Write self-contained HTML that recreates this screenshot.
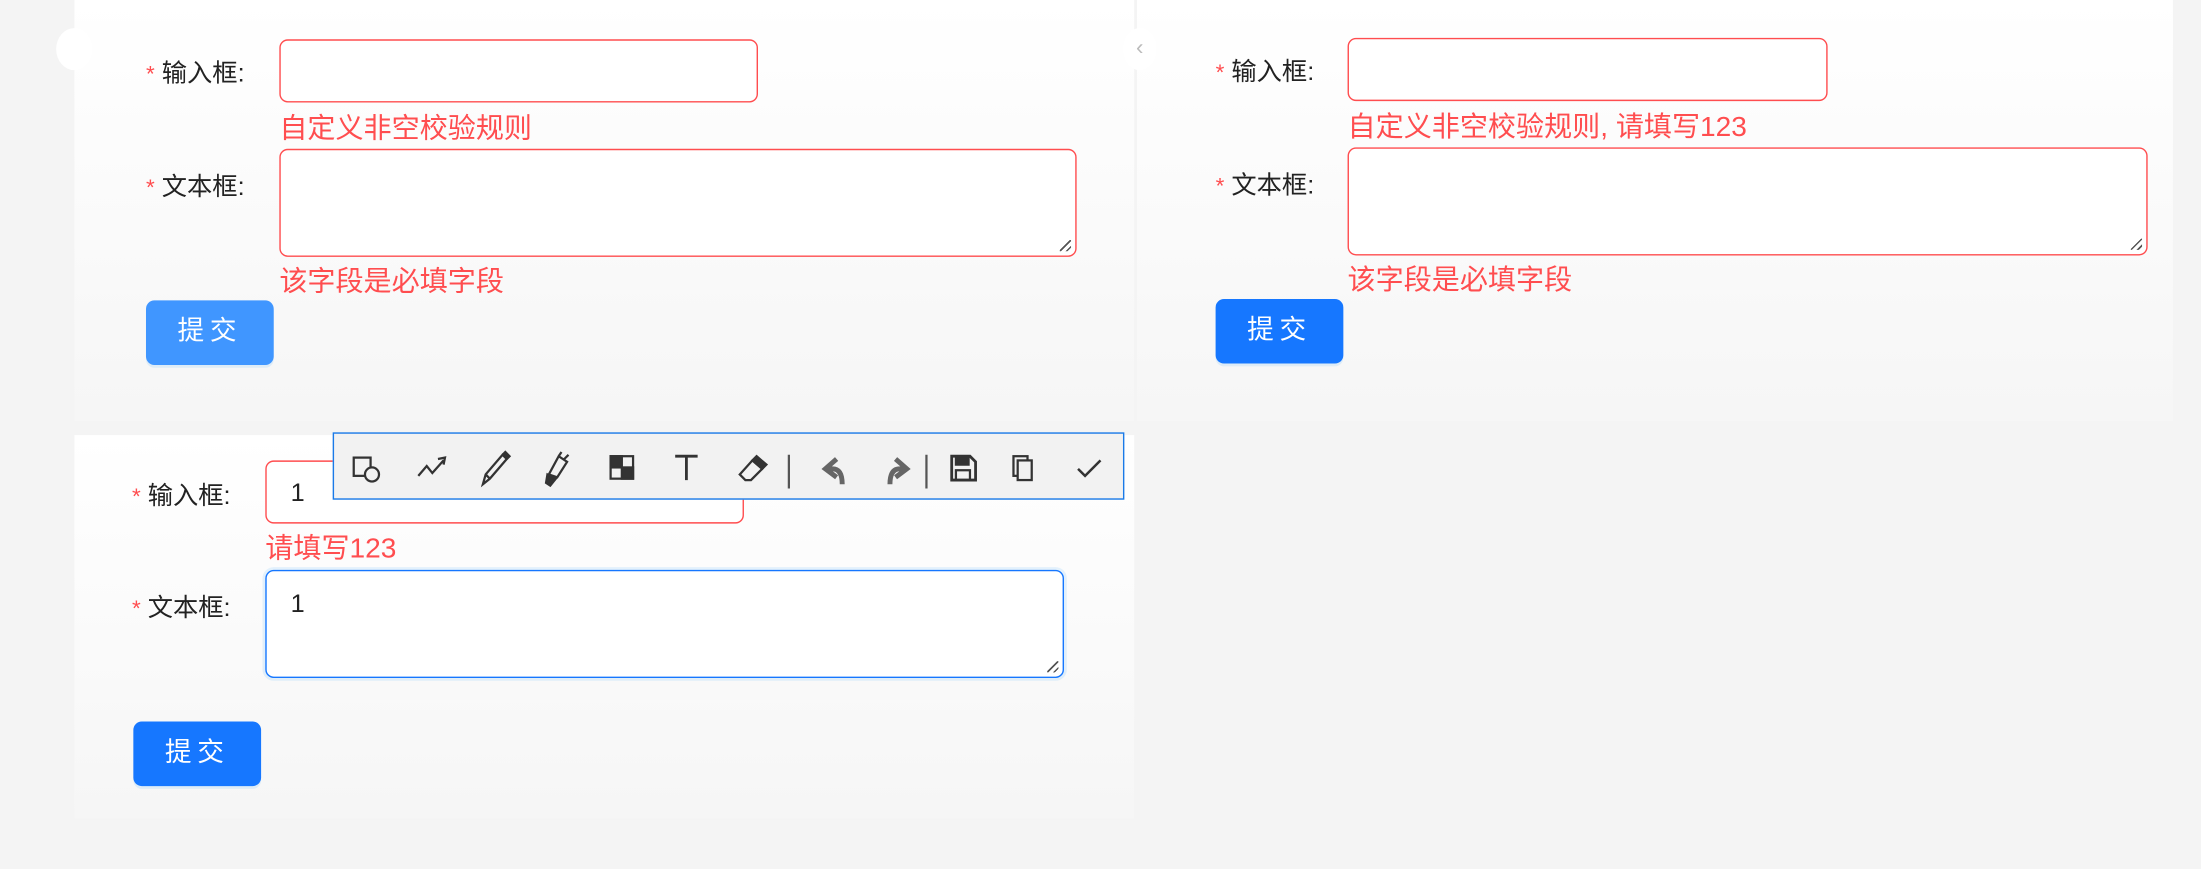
<!DOCTYPE html>
<html><head><meta charset="utf-8"><style>
html,body{margin:0;padding:0;width:2201px;height:869px;overflow:hidden;background:#f4f4f4}
#w{position:absolute;left:0;top:0;width:1568px;height:619px;transform:scale(1.40370);transform-origin:0 0;font-family:"Liberation Sans","Noto Sans CJK SC",sans-serif;font-size:18px}
.p{position:absolute;background:linear-gradient(#fff,#f6f6f6)}
.a{position:absolute}
.req{color:#ff4d4f;font-size:16px}
.lab{color:#222;}
.in{position:absolute;border:1.5px solid #ff4d4f;border-radius:6px;background:#fff;box-sizing:border-box}
.err{position:absolute;color:#ff4d4f;font-size:20px;line-height:20px}
.btn{position:absolute;width:91px;height:46px;border-radius:6px;background:#1677ff;color:#fff;font-size:19px;text-align:center;line-height:46px;letter-spacing:4px;box-shadow:0 2px 0 rgba(5,145,255,.1)}
.rs{position:absolute;right:3px;bottom:3px;width:8px;height:8px;background:linear-gradient(135deg,transparent 45%,#555 45%,#555 55%,transparent 55%,transparent 75%,#555 75%,#555 85%,transparent 85%)}
svg{position:absolute}
</style></head><body><div id="w">
<div class="p" style="left:53px;top:0;width:755px;height:300px"></div>
<div class="p" style="left:810px;top:0;width:738px;height:300px"></div>
<div class="p" style="left:53px;top:310px;width:755px;height:273px"></div>
<div class="a" style="left:40px;top:20px;width:26px;height:30px;border-radius:50%;background:#fff"></div>
<div class="a" style="left:800px;top:20px;width:24px;height:30px;border-radius:50%;background:#fff;color:#bbb;font-size:16px;text-align:center;line-height:30px">‹</div>

<div class="a" style="left:104px;top:38px"><span class="req">*</span> <span class="lab">输入框:</span></div>
<div class="in" style="left:199px;top:28px;width:341px;height:45px"></div>
<div class="err" style="left:199px;top:82px">自定义非空校验规则</div>
<div class="a" style="left:104px;top:119px"><span class="req">*</span> <span class="lab">文本框:</span></div>
<div class="in" style="left:199px;top:106px;width:568px;height:77px"><div class="rs"></div></div>
<div class="err" style="left:199px;top:191px">该字段是必填字段</div>
<div class="btn" style="left:104px;top:214px;background:#4096ff">提交</div>

<div class="a" style="left:866px;top:37px"><span class="req">*</span> <span class="lab">输入框:</span></div>
<div class="in" style="left:960px;top:27px;width:342px;height:45px"></div>
<div class="err" style="left:960px;top:81px">自定义非空校验规则, 请填写123</div>
<div class="a" style="left:866px;top:118px"><span class="req">*</span> <span class="lab">文本框:</span></div>
<div class="in" style="left:960px;top:105px;width:570px;height:77px"><div class="rs"></div></div>
<div class="err" style="left:960px;top:190px">该字段是必填字段</div>
<div class="btn" style="left:866px;top:213px">提交</div>

<div class="a" style="left:94px;top:339px"><span class="req">*</span> <span class="lab">输入框:</span></div>
<div class="in" style="left:189px;top:328px;width:341px;height:45px"><span class="a" style="left:17px;top:12px;color:#222">1</span></div>
<div class="err" style="left:189px;top:381px">请填写123</div>
<div class="a" style="left:94px;top:419px"><span class="req">*</span> <span class="lab">文本框:</span></div>
<div class="in" style="left:189px;top:406px;width:569px;height:77px;border-color:#1677ff;box-shadow:0 0 0 2px rgba(5,145,255,.1)"><span class="a" style="left:17px;top:13px;color:#222">1</span><div class="rs"></div></div>
<div class="btn" style="left:95px;top:514px">提交</div>

<div class="a" style="left:237px;top:308px;width:562px;height:46px;background:#f2f2f2;border:1.5px solid #1a7ae8"></div>
<svg style="left:238px;top:309px" width="562" height="48" viewBox="0 0 562 48" fill="none" stroke="#333" stroke-width="1.6">
<rect x="14" y="17" width="12" height="13"/><circle cx="27" cy="29" r="5" fill="#f2f2f2"/>
<path d="M60 30 L66 23 L70 28 L78 19 M74 18 L79 17 L78 22"/>
<path d="M106 36 L108 29 L120 15 L123 18 L111 32 Z M108 29 L111 32"/><path d="M120 15 L122 13 L125 16 L123 18" fill="#333"/>
<path d="M153 29 L160 16 L166 20 L159 31 Z M160 16 L162 13 M164 18 L167 15"/><path d="M152 29 L158 32 L154 37 L151 35 Z" fill="#333"/>
<rect x="197" y="16" width="16" height="16"/><rect x="197" y="16" width="8" height="8" fill="#333"/><rect x="205" y="24" width="8" height="8" fill="#333"/>
<path d="M243 16 H259 M251 16 V33" stroke-width="2"/>
<path d="M289 29 L298 19 L305 25 L297 33 L293 33 Z"/><path d="M298 19 L301 16 L308 22 L305 25 Z" fill="#333"/>
<path d="M324 15 V39 M422 15 V39" stroke="#555"/>
<path d="M358 18 L350 25 L358 31 M351 25 H355 Q362 25 362 36" stroke="#666" stroke-width="3.5"/>
<path d="M400 18 L408 25 L400 31 M407 25 H403 Q396 25 396 36" stroke="#666" stroke-width="3.5"/>
<path d="M440 16 H453 L457 20 V33 H440 Z" stroke-width="2"/><rect x="443" y="16" width="9" height="6" fill="#333"/><rect x="443" y="26" width="10" height="7"/>
<rect x="484" y="16" width="10" height="14"/><rect x="487" y="19" width="10" height="14" fill="#f2f2f2"/>
<path d="M530 25 L535 30 L546 19" stroke-width="1.8"/>
</svg>
</div></body></html>
